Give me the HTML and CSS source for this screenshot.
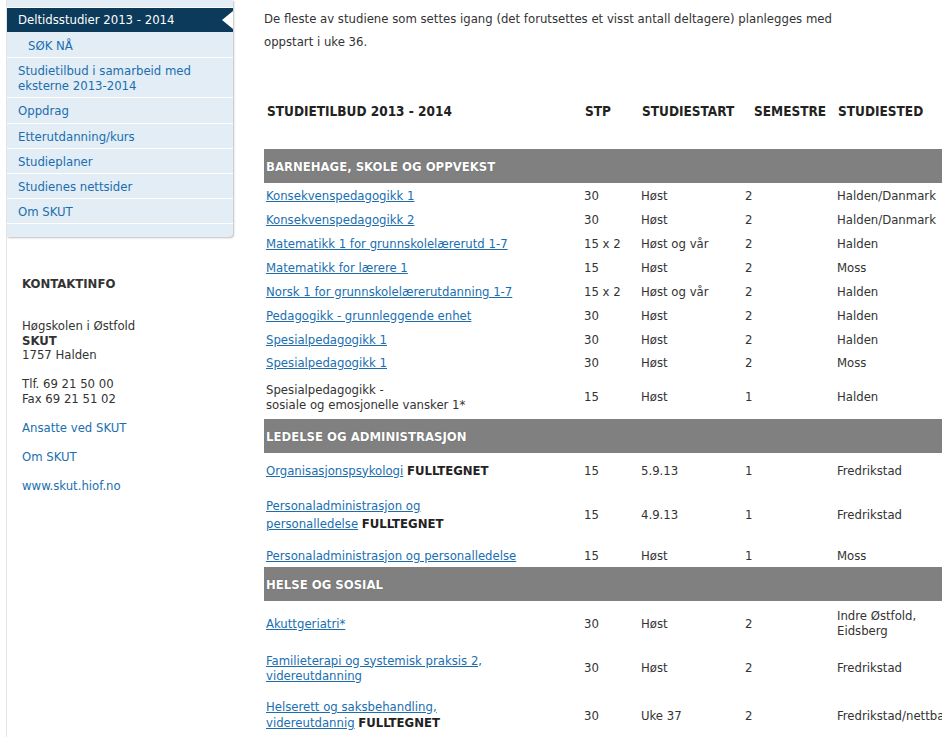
FILE: index.html
```html
<!DOCTYPE html>
<html lang="no">
<head>
<meta charset="utf-8">
<title>Deltidsstudier 2013 - 2014</title>
<link rel="stylesheet" href="styles.css">
</head>
<body>
<div class="page">
  <aside class="sidebar">
    <nav class="subnav">
      <div class="nav-item nav-stub"></div>
      <a class="nav-item active" href="#">Deltidsstudier 2013 - 2014<span class="notch"></span></a>
      <a class="nav-item sub" href="#">SØK NÅ</a>
      <a class="nav-item" href="#">Studietilbud i samarbeid med eksterne 2013-2014</a>
      <a class="nav-item" href="#">Oppdrag</a>
      <a class="nav-item" href="#">Etterutdanning/kurs</a>
      <a class="nav-item" href="#">Studieplaner</a>
      <a class="nav-item" href="#">Studienes nettsider</a>
      <a class="nav-item" href="#">Om SKUT</a>
      <div class="nav-item nav-end"></div>
    </nav>
    <section class="contact">
      <h3 class="contact-title">KONTAKTINFO</h3>
      <p class="contact-p">Høgskolen i Østfold<br><strong>SKUT</strong><br>1757 Halden</p>
      <p class="contact-p">Tlf. 69 21 50 00<br>Fax 69 21 51 02</p>
      <p class="contact-p"><a href="#">Ansatte ved SKUT</a></p>
      <p class="contact-p"><a href="#">Om SKUT</a></p>
      <p class="contact-p"><a href="#">www.skut.hiof.no</a></p>
    </section>
  </aside>
  <main class="main">
    <p class="intro">De fleste av studiene som settes igang (det forutsettes et visst antall deltagere) planlegges med oppstart i uke 36.</p>
    <table class="studies">
      <colgroup>
        <col class="w-name"><col class="w-stp"><col class="w-start"><col class="w-sem"><col class="w-place">
      </colgroup>
      <thead>
        <tr>
          <th>STUDIETILBUD 2013 - 2014</th>
          <th>STP</th>
          <th>STUDIESTART</th>
          <th class="th-sem">SEMESTRE</th>
          <th>STUDIESTED</th>
        </tr>
      </thead>
      <tbody>
        <tr class="cat"><td colspan="5">BARNEHAGE, SKOLE OG OPPVEKST</td></tr>
        <tr class="r24"><td><a href="#">Konsekvenspedagogikk 1</a></td><td>30</td><td>Høst</td><td>2</td><td>Halden/Danmark</td></tr>
        <tr class="r24"><td><a href="#">Konsekvenspedagogikk 2</a></td><td>30</td><td>Høst</td><td>2</td><td>Halden/Danmark</td></tr>
        <tr class="r24"><td><a href="#">Matematikk 1 for grunnskolelærerutd 1-7</a></td><td>15 x 2</td><td>Høst og vår</td><td>2</td><td>Halden</td></tr>
        <tr class="r24"><td><a href="#">Matematikk for lærere 1</a></td><td>15</td><td>Høst</td><td>2</td><td>Moss</td></tr>
        <tr class="r24"><td><a href="#">Norsk 1 for grunnskolelærerutdanning 1-7</a></td><td>15 x 2</td><td>Høst og vår</td><td>2</td><td>Halden</td></tr>
        <tr class="r24"><td><a href="#">Pedagogikk - grunnleggende enhet</a></td><td>30</td><td>Høst</td><td>2</td><td>Halden</td></tr>
        <tr class="r24"><td><a href="#">Spesialpedagogikk 1</a></td><td>30</td><td>Høst</td><td>2</td><td>Halden</td></tr>
        <tr class="r23"><td><a href="#">Spesialpedagogikk 1</a></td><td>30</td><td>Høst</td><td>2</td><td>Moss</td></tr>
        <tr class="r45"><td>Spesialpedagogikk -<br>sosiale og emosjonelle vansker 1*</td><td>15</td><td>Høst</td><td>1</td><td>Halden</td></tr>
        <tr class="cat"><td colspan="5">LEDELSE OG ADMINISTRASJON</td></tr>
        <tr class="r34"><td><a href="#">Organisasjonspsykologi</a> <strong>FULLTEGNET</strong></td><td>15</td><td>5.9.13</td><td>1</td><td>Fredrikstad</td></tr>
        <tr class="r56"><td><a href="#">Personaladministrasjon og<br>personalledelse</a> <strong>FULLTEGNET</strong></td><td>15</td><td>4.9.13</td><td>1</td><td>Fredrikstad</td></tr>
        <tr class="r24"><td><a href="#">Personaladministrasjon og personalledelse</a></td><td>15</td><td>Høst</td><td>1</td><td>Moss</td></tr>
        <tr class="cat"><td colspan="5">HELSE OG SOSIAL</td></tr>
        <tr class="r44"><td><a href="#">Akuttgeriatri*</a></td><td>30</td><td>Høst</td><td>2</td><td>Indre Østfold,<br>Eidsberg</td></tr>
        <tr class="r45"><td><a href="#">Familieterapi og systemisk praksis 2,<br>videreutdanning</a></td><td>30</td><td>Høst</td><td>2</td><td>Fredrikstad</td></tr>
        <tr class="r50"><td><a href="#">Helserett og saksbehandling,<br>videreutdannig</a> <strong>FULLTEGNET</strong></td><td>30</td><td>Uke 37</td><td>2</td><td>Fredrikstad/nettbasert</td></tr>
      </tbody>
    </table>
  </main>
</div>
</body>
</html>
```
FILE: styles.css
```css
html, body {
  margin: 0;
  padding: 0;
  overflow: hidden;
  background: #fff;
}
body {
  font-family: "DejaVu Sans Condensed", "DejaVu Sans", sans-serif;
  font-size: 13px;
  color: #333;
}
a {
  color: #1a6eb0;
}
.page {
  display: flex;
  align-items: flex-start;
  width: 1100px;
  min-height: 737px;
}
.sidebar {
  width: 226px;
  flex: none;
  margin-left: 6px;
  border-left: 1px solid #e6e6e6;
  min-height: 737px;
}
.subnav {
  display: flex;
  flex-direction: column;
  background: #e3edf5;
  border-bottom-right-radius: 4px;
  box-shadow: 1px 1px 2px rgba(0, 0, 0, 0.25);
}
.nav-item {
  display: block;
  position: relative;
  border-top: 1px solid #fff;
  padding: 5px 11px 4.2px;
  line-height: 15px;
  text-decoration: none;
  color: #1a6eb0;
}
.nav-stub {
  border-top: none;
  padding: 0;
  height: 7px;
}
.nav-end {
  padding: 0;
  height: 13px;
}
.active {
  background: #0b3a5a;
  color: #fff;
  padding-top: 4px;
  padding-bottom: 5px;
}
.active + .nav-item {
  border-top: none;
  padding-top: 6px;
}
.notch {
  position: absolute;
  right: 0;
  top: 3px;
  width: 0;
  height: 0;
  border-top: 9px solid transparent;
  border-bottom: 9px solid transparent;
  border-right: 11px solid #fff;
}
.sub {
  padding-left: 21px;
}
.contact {
  padding: 39px 0 0 15px;
  line-height: 14.5px;
}
.contact-title {
  margin: 0 0 27px;
  font-size: 13px;
  line-height: 16px;
  font-weight: bold;
  color: #333;
}
.contact-p {
  margin: 0 0 14.5px;
}
.contact a {
  text-decoration: none;
}
.main {
  flex: none;
  width: 720px;
  margin-left: 31px;
}
.intro {
  margin: 7px 0 0;
  width: 620px;
  font-family: "DejaVu Sans Condensed", sans-serif;
  font-size: 13px;
  line-height: 23px;
}
.studies {
  margin-top: 42px;
  border-collapse: collapse;
  table-layout: fixed;
  width: 711px;
}
.w-name { width: 318px; }
.w-stp { width: 57px; }
.w-start { width: 104px; }
.w-sem { width: 92px; }
.w-place { width: 140px; }
.studies th {
  height: 32px;
  padding: 0 0 22px 3px;
  text-align: left;
  vertical-align: middle;
  font-family: "DejaVu Sans Condensed", sans-serif;
  font-size: 13.5px;
  font-weight: bold;
  color: #222;
  white-space: nowrap;
}
.studies th.th-sem {
  padding-left: 11px;
}
.studies td {
  padding: 0 2px;
  vertical-align: middle;
  line-height: 15px;
  white-space: nowrap;
}
.studies td strong {
  color: #222;
}
.cat td {
  height: 34px;
  background: #808080;
  color: #fff;
  font-weight: bold;
  text-shadow: 0 0 1px rgba(0, 0, 0, 0.4);
}
.r23 td { height: 23px; }
.r24 td { height: 24px; }
.r34 td { height: 34px; }
.r44 td { height: 44px; }
.r45 td { height: 45px; }
.r50 td { height: 50px; }
.r56 td { height: 56px; line-height: 18px; }
.r50 td:first-child { line-height: 16px; }
```
